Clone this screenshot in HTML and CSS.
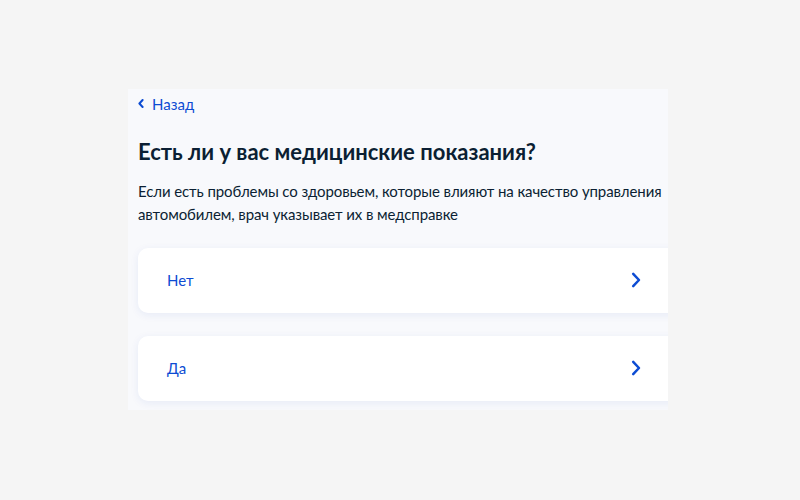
FILE: index.html
```html
<!DOCTYPE html>
<html lang="ru">

<head>
    <meta charset="UTF-8">
    <meta name="viewport" content="width=device-width, initial-scale=1.0">
    <title>Медицинские показания</title>
    <link rel="stylesheet" href="styles.css">
</head>

<body>
    <div class="page">
        <div class="panel">
            <a class="back" href="#">
                <svg class="back-icon" width="6" height="9" viewBox="0 0 6 9">
                    <path d="M4.6 1 L1.4 4.5 L4.6 8" fill="none" stroke="#0d4cd3" stroke-width="2" stroke-linecap="round" stroke-linejoin="round" />
                </svg>
                Назад
            </a>
            <h1 class="title">Есть ли у вас медицинские показания?</h1>
            <p class="hint">Если есть проблемы со здоровьем, которые влияют на качество управления автомобилем, врач указывает их в медсправке</p>
            <div class="options">
                <a class="option" href="#">
                    <span>Нет</span>
                    <svg class="arrow" width="10" height="16" viewBox="0 0 10 16">
                        <path d="M2.2 1.8 L8 8 L2.2 14.2" fill="none" stroke="#0d4cd3" stroke-width="2.5" stroke-linecap="round" stroke-linejoin="round" />
                    </svg>
                </a>
                <a class="option" href="#">
                    <span>Да</span>
                    <svg class="arrow" width="10" height="16" viewBox="0 0 10 16">
                        <path d="M2.2 1.8 L8 8 L2.2 14.2" fill="none" stroke="#0d4cd3" stroke-width="2.5" stroke-linecap="round" stroke-linejoin="round" />
                    </svg>
                </a>
            </div>
        </div>
    </div>
</body>

</html>
```

FILE: styles.css
```css
* {
    padding: 0;
    margin: 0;
    box-sizing: border-box;
}

html,
body {
    width: 100%;
    height: 100%;
}

body {
    background-color: #f5f5f5;
    font-family: Lato, "Noto Sans", sans-serif;
    color: #0b1f33;
}

.page {
    padding: 89px 0 0 128px;
}

.panel {
    width: 540px;
    background-color: #f8f9fc;
    padding: 3px 0 9px 10px;
    overflow: hidden;
}

.back {
    display: inline-flex;
    align-items: center;
    gap: 8px;
    font-size: 15px;
    line-height: 18px;
    color: #0d4cd3;
    text-decoration: none;
}

.title {
    margin-top: 24px;
    font-size: 22px;
    line-height: 30px;
    font-weight: 700;
    color: #0b1f33;
}

.hint {
    margin-top: 13px;
    font-size: 15px;
    line-height: 23px;
    letter-spacing: -0.1px;
    color: #0b1f33;
}

.options {
    margin-top: 22px;
    display: flex;
    flex-direction: column;
    gap: 23px;
}

.option {
    width: 560px;
    height: 65px;
    display: flex;
    align-items: center;
    justify-content: space-between;
    padding: 0 57px 0 29px;
    background-color: #fff;
    border-radius: 10px;
    box-shadow: 0 2px 8px rgba(30, 70, 180, 0.08);
    font-size: 15px;
    color: #0d4cd3;
    text-decoration: none;
}

.arrow {
    flex: none;
}
```
